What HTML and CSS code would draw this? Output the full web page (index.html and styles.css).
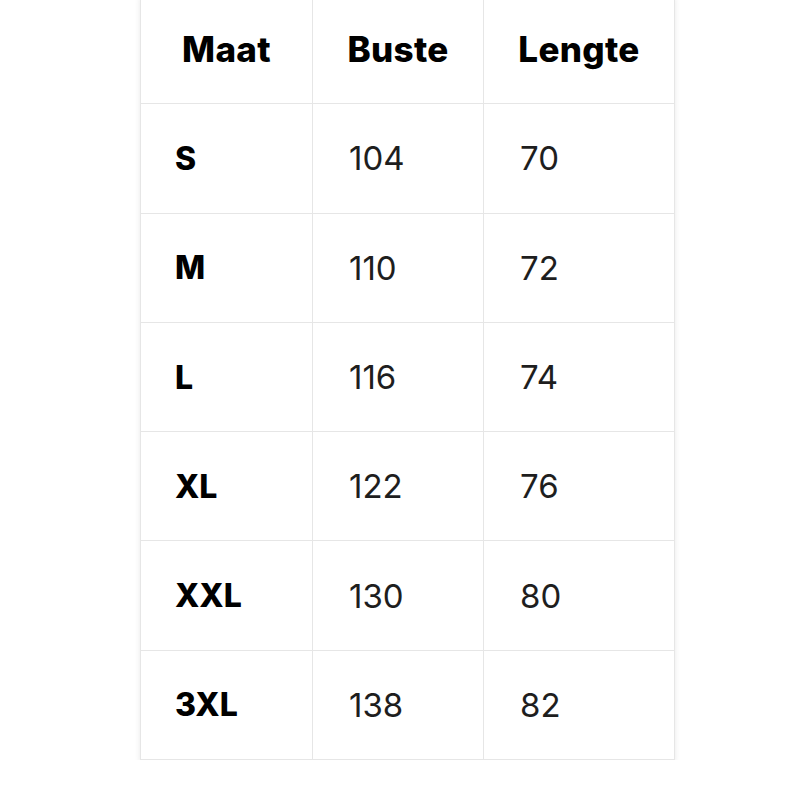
FILE: index.html
```html
<!DOCTYPE html>
<html lang="nl">
<head>
<meta charset="utf-8">
<title>Maattabel</title>
<link rel="stylesheet" href="styles.css">
</head>
<body>
<div class="page">
  <table class="size-table">
    <colgroup>
      <col class="c1"><col class="c2"><col class="c3">
    </colgroup>
    <thead>
      <tr><th>Maat</th><th>Buste</th><th>Lengte</th></tr>
    </thead>
    <tbody>
      <tr><td class="size">S</td><td>104</td><td>70</td></tr>
      <tr><td class="size">M</td><td>110</td><td>72</td></tr>
      <tr><td class="size">L</td><td>116</td><td>74</td></tr>
      <tr><td class="size">XL</td><td>122</td><td>76</td></tr>
      <tr><td class="size">XXL</td><td>130</td><td>80</td></tr>
      <tr><td class="size">3XL</td><td>138</td><td>82</td></tr>
    </tbody>
  </table>
</div>
</body>
</html>
```

FILE: styles.css
```css
html, body {
  margin: 0;
  padding: 0;
  background: #ffffff;
}
.page {
  padding-left: 140px;
  margin-top: -6px;
}
.size-table {
  border-collapse: collapse;
  width: 534px;
  table-layout: fixed;
  font-family: "Inter", "Open Sans", sans-serif;
  color: #111;
  box-shadow: 0 3px 6px rgba(0, 0, 0, 0.09);
}
.c1 { width: 172px; }
.c2 { width: 171px; }
.c3 { width: 191px; }
.size-table th,
.size-table td {
  border: 1px solid #e6e6e6;
  height: 109.3px;
  padding: 0;
  box-sizing: border-box;
  font-size: 33px;
}
.size-table th {
  font-weight: 800;
  font-size: 35px;
  letter-spacing: 0.3px;
  text-align: center;
  color: #000;
}
.size-table td {
  text-align: left;
  padding-left: 36px;
  font-weight: 400;
  color: #1e1e1e;
}
.size-table td.size {
  padding-left: 34px;
  font-weight: 800;
  font-size: 32px;
  color: #000;
}
```
